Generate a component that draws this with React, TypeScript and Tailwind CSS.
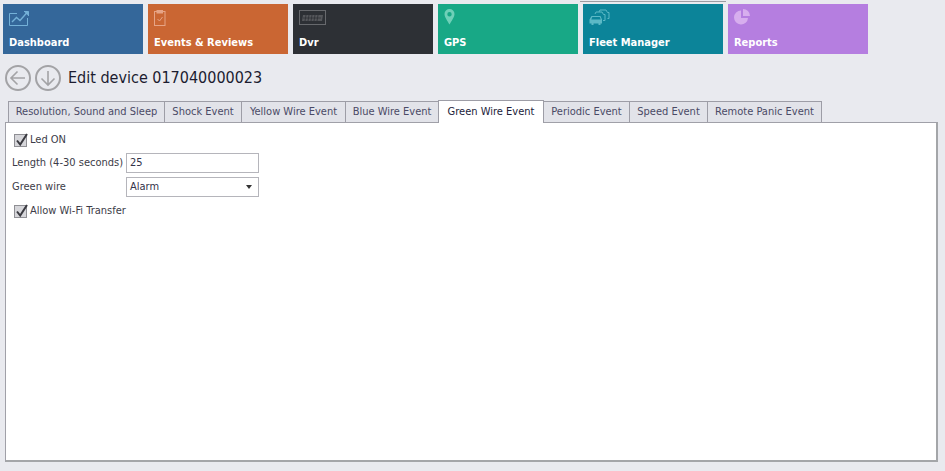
import React from "react";

const font = { fontFamily: '"DejaVu Sans Condensed", "Open Sans", sans-serif' };

function Tile({ label, bg, icon, bar }: { label: string; bg: string; icon: React.ReactNode; bar?: boolean }) {
  return (
    <div className={`relative w-[140px] h-[50px] flex flex-col pl-[6px] ${bg}`}>
      {bar && <div className="absolute left-[-3px] top-[-3px] w-[146px] h-px bg-[#9c9ca2]" />}
      <div className="h-[17px] mt-[6px]">{icon}</div>
      <div className="mt-[9px] text-[11px] leading-[14px] font-bold text-white">{label}</div>
    </div>
  );
}

function Circle({ dir }: { dir: "left" | "down" }) {
  return (
    <svg width="26" height="26" viewBox="0 0 26 26" fill="none" stroke="#a3a3a6" strokeWidth="1.6">
      <circle cx="13" cy="13" r="12" strokeWidth="2" />
      {dir === "left" ? (
        <path d="M20 13H6M12.5 6.5L6 13l6.5 6.5" />
      ) : (
        <path d="M13 6v14M6.5 13.5L13 20l6.5-6.5" />
      )}
    </svg>
  );
}

function Check() {
  return (
    <div className="relative w-[13px] h-[13px] bg-[#d6d6da] border border-[#8f8f94]">
      <svg className="absolute left-[0px] top-[-3px]" width="14" height="15" viewBox="0 0 14 15" fill="none">
        <path d="M2 8.5L5.2 12.5L12 2" stroke="#3a3a40" strokeWidth="2" />
      </svg>
    </div>
  );
}

const tabs: [string, number][] = [
  ["Resolution, Sound and Sleep", 157],
  ["Shock Event", 78],
  ["Yellow Wire Event", 105],
  ["Blue Wire Event", 94],
  ["Green Wire Event", 106],
  ["Periodic Event", 87],
  ["Speed Event", 79],
  ["Remote Panic Event", 115],
];

export default function App() {
  return (
    <div style={font} className="w-[945px] h-[471px] bg-[#e9eaef] overflow-hidden text-[11px] text-[#33334a]">
      <div className="flex gap-[5px] pl-[3px] pt-[4px]">
        <Tile
          label="Dashboard"
          bg="bg-[#34679a]"
          icon={
            <svg width="21" height="17" viewBox="0 0 21 17" fill="none" stroke="#74b1d8" strokeWidth="1">
              <path d="M8 3.5H.5v12h18V8" />
              <path d="M3 12l4.5-4.5 3.5 3L18.5 2" strokeWidth="1.4" />
              <path d="M15 1.500h4.500V6" fill="#74b1d8" />
            </svg>
          }
        />
        <Tile
          label="Events & Reviews"
          bg="bg-[#ca6633]"
          icon={
            <svg width="12" height="16" viewBox="0 0 12 16" fill="none" stroke="#e6a486" strokeWidth="1">
              <rect x=".5" y="1.500" width="10.500" height="14" />
              <rect x="3" y=".5" width="5.500" height="2.500" fill="#e6a486" />
              <path d="M3.500 9l2 2 3-4" />
            </svg>
          }
        />
        <Tile
          label="Dvr"
          bg="bg-[#2d3035]"
          icon={
            <svg width="27" height="15" viewBox="0 0 27 15" fill="none">
              <rect x=".5" y=".5" width="26" height="14" stroke="#67696d" />
              <path d="M3 11l1-6h20l-1 6Z" fill="#55575b" />
              <path d="M7 5l-1 6M10 5l-1 6M13 5l-1 6M16 5l-1 6M19 5l-1 6M4 8h18" stroke="#2d3035" strokeWidth=".8" />
            </svg>
          }
        />
        <Tile
          label="GPS"
          bg="bg-[#18a886]"
          icon={
            <svg width="11" height="16" viewBox="0 0 11 16" className="mt-[-1px]">
              <path fillRule="evenodd" d="M5.500 0A5 5 0 0 1 10.500 5C10.500 8 7.500 12 5.500 15.500C3.500 12 .5 8 .5 5A5 5 0 0 1 5.500 0ZM5.500 3A2.200 2.200 0 1 0 5.500 7.400 2.200 2.200 0 0 0 5.500 3Z" fill="#6fd0b8" />
            </svg>
          }
        />
        <Tile
          label="Fleet Manager"
          bar
          bg="bg-[#0c8499]"
          icon={
            <svg width="21" height="17" viewBox="0 0 21 17" className="mt-[-1px]" fill="none" stroke="#5cb9c6" strokeWidth="1">
              <path d="M10 3l1-2h6l1.500 2.500H20v6h-1.500" />
              <path d="M6 5l1-2h6l1.500 2.500H16v6h-2" />
              <path fill="#5cb9c6" stroke="none" fillRule="evenodd" d="M2.500 7h9l1.500 3.500v4H11.500V16h-2v-1.500h-5V16h-2v-1.500H0.500v-4ZM3.300 8l-1 2.500h9.500l-1-2.500Z" />
            </svg>
          }
        />
        <Tile
          label="Reports"
          bg="bg-[#b57ee0]"
          icon={
            <svg width="17" height="16" viewBox="0 0 17 16" className="mt-[-1px]" fill="#d7aeee">
              <path d="M7 1.500A7 7 0 1 0 14 9H7Z" />
              <path d="M9 0a7 7 0 0 1 7 7H9Z" />
            </svg>
          }
        />
      </div>

      <div className="flex items-center h-[26px] mt-[11px] pl-[5px]">
        <Circle dir="left" />
        <div className="ml-[4px]"><Circle dir="down" /></div>
        <div className="ml-[7px] text-[16px] text-[#1c1c30] leading-[26px]">Edit device 017040000023</div>
      </div>

      <div className="flex items-end pl-[8px] h-[22px] mt-[9px]">
        {tabs.map(([t, w]) => {
          const active = t === "Green Wire Event";
          return (
            <div
              key={t}
              style={{ width: w }}
              className={
                active
                  ? "relative z-10 h-[23px] -mb-px -mr-px bg-white border border-b-0 border-[#9d9da6] flex items-center justify-center text-[#22223a]"
                  : "h-[21px] -mr-px bg-[#e2e3e9] border border-b-0 border-[#9d9da6] flex items-center justify-center text-[#4a4a66]"
              }
            >
              {t}
            </div>
          );
        })}
      </div>

      <div className="ml-[5px] w-[933px] h-[340px] bg-white border border-[#a0a0a8] border-r-2 border-b-2 border-r-[#a4a6a9] border-b-[#a4a6a9] px-[6px] text-[#3c3c48]">
        <div className="flex items-center gap-[3px] mt-[10px] ml-[2px] h-[14px]">
          <Check />
          <span>Led ON</span>
        </div>
        <div className="flex items-center mt-[6px] h-[20px]">
          <span className="w-[114px]">Length (4-30 seconds)</span>
          <div className="w-[133px] h-[20px] border border-[#b5b5bb] pl-[3px] leading-[18px] text-[#33334a]">25</div>
        </div>
        <div className="flex items-center mt-[4px] h-[20px]">
          <span className="w-[114px]">Green wire</span>
          <div className="w-[133px] h-[20px] border border-[#b5b5bb] pl-[3px] leading-[18px] text-[#33334a] flex items-center justify-between pr-[6px]">
            <span>Alarm</span>
            <span className="w-0 h-0 border-x-[3.5px] border-x-transparent border-t-[4px] border-t-[#333]" />
          </div>
        </div>
        <div className="flex items-center gap-[3px] mt-[7px] ml-[2px] h-[14px]">
          <Check />
          <span>Allow Wi-Fi Transfer</span>
        </div>
      </div>
    </div>
  );
}
